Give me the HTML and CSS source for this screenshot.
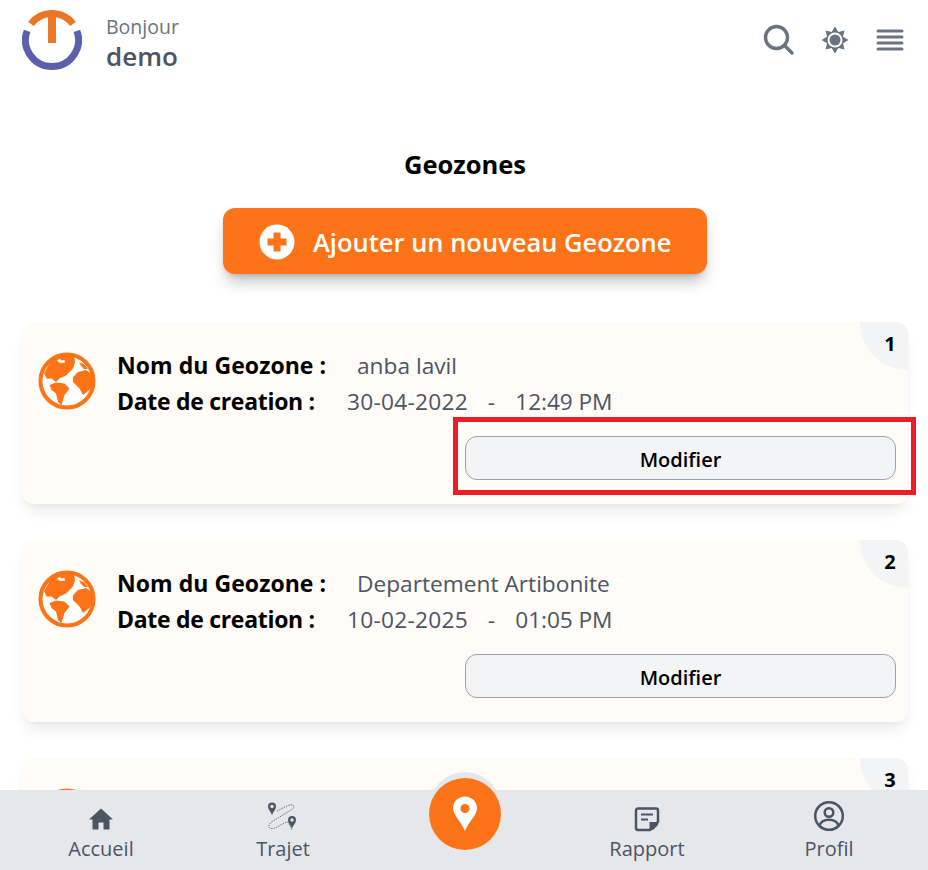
FILE: index.html
```html
<!DOCTYPE HTML>
<html>
<head>
<meta http-equiv="Content-Type" content="text/html; charset=utf-8">
<title>Geozones</title>
<link rel="stylesheet" href="styles.css">
</head>

<body>
	<div id="page">
		<div class="header">
			<div class="hello">
				<svg class="logo" width="60" height="60" viewBox="22 10 60 60">
					<path d="M27.1 30.9A26.5 26.5 0 1 0 76.9 30.9" fill="none" stroke="#5b60ac" stroke-width="7"/>
					<path d="M31 23.8A26.5 26.5 0 0 1 73 23.8" fill="none" stroke="#ea7726" stroke-width="7"/>
					<rect x="48" y="12" width="8" height="31" fill="#ea7726"/>
				</svg>
				<div class="hello_text">
					<p class="hello_small">Bonjour</p>
					<p class="hello_name">demo</p>
				</div>
			</div>
			<div class="tools">
				<svg class="search" width="32" height="32" viewBox="0 0 32 32">
					<circle cx="13.5" cy="13.5" r="11" fill="none" stroke="#6b7280" stroke-width="3.4"/>
					<path d="M21.5 21.5L29 29" stroke="#6b7280" stroke-width="3.4" stroke-linecap="round"/>
				</svg>
				<svg width="28" height="28" viewBox="0 0 28 28">
					<path d="M14 0.5L17.3 6 23.5 4.5 22 10.7 27.5 14 22 17.3 23.5 23.5 17.3 22 14 27.5 10.7 22 4.5 23.5 6 17.3 0.5 14 6 10.7 4.5 4.5 10.7 6Z" fill="#6b7280"/>
					<circle cx="14" cy="14" r="7.5" fill="#fff"/>
					<circle cx="14" cy="14" r="5.5" fill="#6b7280"/>
				</svg>
				<svg width="28" height="24" viewBox="0 0 28 24">
					<path d="M2 3H26M2 9H26M2 15H26M2 21H26" stroke="#6b7280" stroke-width="3" stroke-linecap="round"/>
				</svg>
			</div>
		</div>

		<h1 class="title">Geozones</h1>

		<a href="javascript:;" class="add">
			<svg width="36" height="36" viewBox="0 0 36 36">
				<circle cx="18" cy="18" r="17.5" fill="#fff"/>
				<path d="M14.5 8.5h7v6h6v7h-6v6h-7v-6h-6v-7h6z" fill="#fc7417"/>
			</svg>
			<span>Ajouter un nouveau Geozone</span>
		</a>

		<div class="card">
			<span class="num">1</span>
			<div class="info">
				<svg class="globe" width="58" height="58" viewBox="0 0 58 58">
					<use href="#globe"/>
				</svg>
				<div class="lines">
					<p class="line"><b class="label1">Nom du Geozone :</b><span>anba lavil</span></p>
					<p class="line"><b class="label2">Date de creation :</b><span class="date">30-04-2022 &nbsp; - &nbsp; <span class="time">12:49 PM</span></span></p>
				</div>
			</div>
			<div class="actions"><a href="javascript:;" class="edit">Modifier</a></div>
			<div class="mark"></div>
		</div>

		<div class="card">
			<span class="num">2</span>
			<div class="info">
				<svg class="globe" width="58" height="58" viewBox="0 0 58 58">
					<use href="#globe"/>
				</svg>
				<div class="lines">
					<p class="line"><b class="label1">Nom du Geozone :</b><span>Departement Artibonite</span></p>
					<p class="line"><b class="label2">Date de creation :</b><span class="date">10-02-2025 &nbsp; - &nbsp; <span class="time">01:05 PM</span></span></p>
				</div>
			</div>
			<div class="actions"><a href="javascript:;" class="edit">Modifier</a></div>
		</div>

		<div class="card">
			<span class="num">3</span>
			<div class="info">
				<svg class="globe" width="58" height="58" viewBox="0 0 58 58">
					<use href="#globe"/>
				</svg>
			</div>
		</div>
	</div>

	<div class="nav">
		<a href="javascript:;" class="nav_item">
			<svg width="26" height="26" viewBox="0 0 26 26"><path d="M13 2.5L1 13.5h3.5v10h6v-7h5v7h6v-10H25z" fill="#4b5563"/></svg>
			<span>Accueil</span>
		</a>
		<a href="javascript:;" class="nav_item">
			<svg width="32" height="30" viewBox="0 0 32 30">
				<path d="M10 9L20 4C26 1 29 4 25 7.500L6 19C0 23 1 27 6 26.500C12 25.500 16 20 21 20L25 28" fill="none" stroke="#6b7280" stroke-width="1" stroke-dasharray="1.5 1"/>
				<path d="M5 0.500a4 4 0 0 1 4 4c0 2.500-2.500 5-4 8.500c-1.500-3.500-4-6-4-8.500a4 4 0 0 1 4-4z" fill="#4b5563"/>
				<circle cx="5" cy="4.500" r="1.700" fill="#e5e7eb"/>
				<path d="M25 14a4 4 0 0 1 4 4c0 2.500-2.500 5-4 8.500c-1.500-3.500-4-6-4-8.500a4 4 0 0 1 4-4z" fill="#4b5563"/>
				<circle cx="25" cy="18" r="1.700" fill="#e5e7eb"/>
			</svg>
			<span>Trajet</span>
		</a>
		<a href="javascript:;" class="nav_center">
			<svg width="26" height="36" viewBox="0 0 26 36">
				<path d="M13 0.500C19.500 0.500 25 5.500 25 12C25 19 17 25 13 35C9 25 1 19 1 12C1 5.500 6.500 0.500 13 0.500Z" fill="#fff"/>
				<circle cx="13" cy="12.500" r="4.500" fill="#fc7417"/>
			</svg>
		</a>
		<a href="javascript:;" class="nav_item">
			<svg width="26" height="26" viewBox="0 0 26 26">
				<path d="M4 2.500H22A2 2 0 0 1 24 4.500V16L16 24H4A2 2 0 0 1 2 22V4.500A2 2 0 0 1 4 2.500Z" fill="none" stroke="#4b5563" stroke-width="2.500"/>
				<path d="M7 8.500H19M7 13.500H14" stroke="#4b5563" stroke-width="2.200"/>
				<path d="M24 16V19L19 24H15.500V16Z" fill="#4b5563"/>
			</svg>
			<span>Rapport</span>
		</a>
		<a href="javascript:;" class="nav_item">
			<svg width="32" height="32" viewBox="0 0 32 32">
				<circle cx="16" cy="16" r="13.800" fill="none" stroke="#4b5563" stroke-width="2.500"/>
				<circle cx="16" cy="12.500" r="4.300" fill="none" stroke="#4b5563" stroke-width="2.500"/>
				<path d="M6.500 25.500C8 21 12 19.800 16 19.800C20 19.800 24 21 25.500 25.500" fill="none" stroke="#4b5563" stroke-width="2.500"/>
			</svg>
			<span>Profil</span>
		</a>
	</div>

	<svg width="0" height="0" class="defs">
		<symbol id="globe" viewBox="0 0 58 58">
			<circle cx="29" cy="29" r="26.500" fill="#fff" stroke="#fc7417" stroke-width="4"/>
			<path d="M6 21L13 9L24 3L36 4L37 10L36.500 12L35 16.500L28 23.500L21.500 26.500L18 30L13.500 26.500L8.500 26.500Z" fill="#fc7417"/>
			<path d="M41 10.500L46 12L50 17L46 17L43 14Z" fill="#fc7417"/>
			<path d="M19 8.500L21.500 7L24 8.500L26.500 8L27 10.500L24 11L21 10.500Z" fill="#fff"/>
			<path d="M35 25L40 20L48 18L55 23L54 36L45 43L41.500 36.500L35 30Z" fill="#fc7417"/>
			<path d="M11.500 33L18 30.500L26.500 31.500L31.500 36.500L26.500 43L23.500 53L20 50L18 41.500L13.500 38Z" fill="#fc7417"/>
		</symbol>
	</svg>
</body>
</html>
```

FILE: styles.css
```css
html, body {margin: 0; padding: 0;}
body {font-family: "Open Sans", "Noto Sans", sans-serif; background: #fff; color: #000;}
p {margin: 0;}
a {text-decoration: none;}
.defs {display: block; height: 0;}

#page {height: 790px; overflow: hidden;}

.header {display: flex; justify-content: space-between; height: 80px; padding: 10px 24px 0 22px; box-sizing: border-box;}
.hello {display: flex; gap: 24px;}
.logo {display: block;}
.hello_small {font-size: 19.500px; line-height: 26px; margin-top: 4px; color: #6b7280;}
.hello_name {font-size: 26px; line-height: 32px; font-weight: 600; color: #4b5563;}
.tools {display: flex; align-items: center; gap: 27px; height: 60px;}
.search {margin-right: -1px;}

.title {margin: 68px 0 0; padding-left: 2px; font-size: 25.500px; line-height: 32px; font-weight: 700; text-align: center;}

.add {display: flex; align-items: center; gap: 18px; width: 484px; height: 66px; margin: 28px 0 0 223px; padding-left: 36px; box-sizing: border-box; background: #fc7417; border-radius: 12px; box-shadow: 0 10px 15px -3px rgba(0,0,0,.25), 0 4px 6px -4px rgba(0,0,0,.2); color: #fff; font-size: 25.500px; font-weight: 600;}
.add svg {flex: none; margin-top: 2px;}
.add span {margin-top: 1px;}

.card {position: relative; height: 182px; margin: 48px 20px 0 22px; padding: 26px 12px 0 16px; box-sizing: border-box; background: #fffbf6; border-radius: 12px; box-shadow: 0 10px 15px -3px rgba(0,0,0,.08), 0 4px 6px -4px rgba(0,0,0,.06);}
.card + .card {margin-top: 36px;}
.num {position: absolute; right: 0; top: 0; width: 48px; height: 48px; padding: 13px 0 0 12px; box-sizing: border-box; background: #f3f4f6; border-radius: 0 12px 0 48px; font-size: 20px; line-height: 18px; font-weight: 700; text-align: center;}
.info {display: flex; gap: 21px; height: 88px;}
.globe {display: block; margin-top: 4px;}
.line {display: flex; height: 35px; font-size: 22.700px; line-height: 35px; color: #4b5563; white-space: nowrap;}
.line + .line {padding-top: 1px;}
.line b {color: #000; font-weight: 700; font-size: 23px;}
.label1 {width: 240px; letter-spacing: .05px;}
.label2 {width: 230px; letter-spacing: -.3px;}
.date {letter-spacing: .25px; word-spacing: .500px;}
.time {letter-spacing: -.1px; word-spacing: 0;}

.actions {display: flex; justify-content: flex-end;}
.edit {display: block; width: 431px; height: 44px; border: 1px solid #9ca3af; border-radius: 12px; box-sizing: border-box; background: #f3f4f6; color: #000; font-size: 20px; font-weight: 600; line-height: 45px; text-align: center;}
.mark {position: absolute; left: 431px; top: 95px; width: 463px; height: 78px; box-sizing: border-box; border: 5px solid #ed1c24;}

.nav {position: relative; z-index: 1; height: 80px; padding: 0 8px 0 10px; background: #e5e7eb; display: grid; grid-template-columns: repeat(5, 182px);}
.nav_item {display: flex; flex-direction: column; align-items: center; justify-content: flex-end; gap: 2px; height: 74px; color: #4b5563; font-size: 20px; line-height: 30px;}
.nav_center {display: flex; align-items: center; justify-content: center; width: 72px; height: 72px; margin: -12px auto 0; background: #fc7417; border-radius: 50%; box-shadow: 0 -6px 0 #e5e7eb;}
```
